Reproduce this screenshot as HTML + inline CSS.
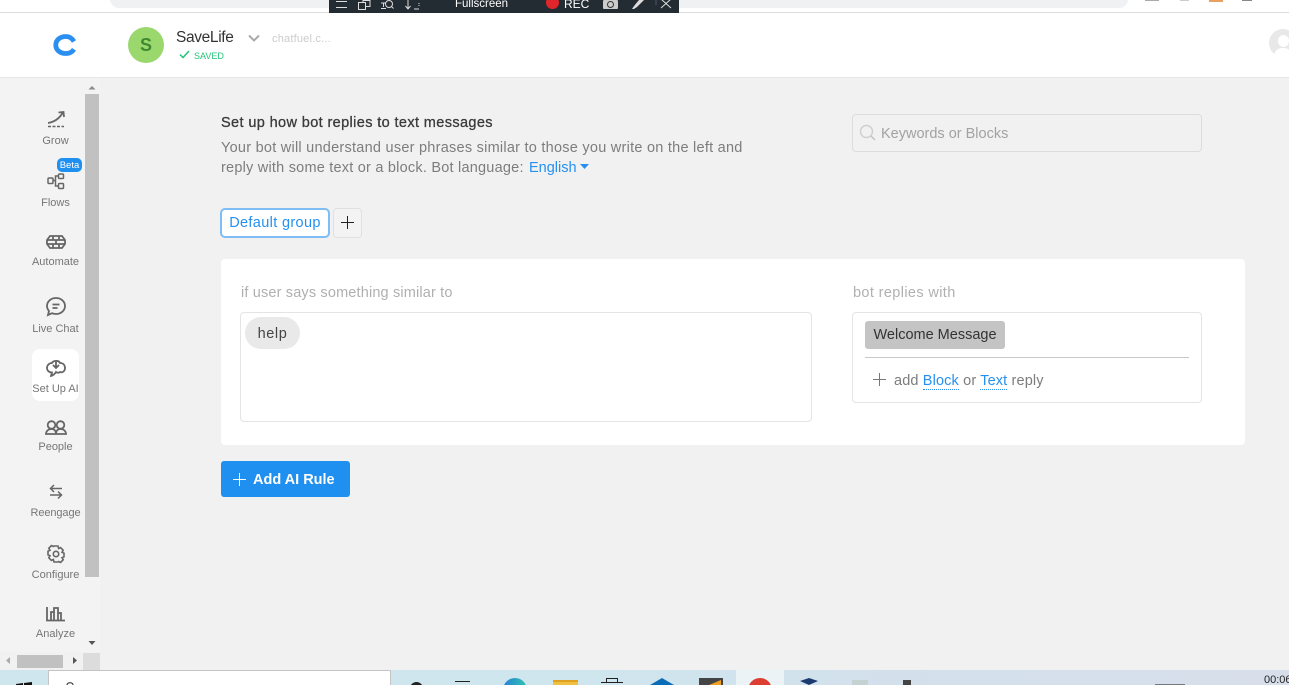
<!DOCTYPE html>
<html><head><meta charset="utf-8"><style>
html,body{margin:0;padding:0;width:1289px;height:685px;overflow:hidden}
body{background:#f1f1f1;font-family:"Liberation Sans",sans-serif;}
#w{position:relative;width:1289px;height:685px;overflow:hidden;background:#f1f1f1}
.a{position:absolute;white-space:nowrap}
.nav{position:absolute;left:0;width:111px;text-align:center;font-size:11px;color:#767676;line-height:13px}
svg{position:absolute;overflow:visible}
.ic{fill:none;stroke:#666;stroke-width:1.8}
</style></head><body><div id="w">
<!-- browser top -->
<div class="a" style="left:0;top:0;width:1289px;height:12px;background:#fff"></div>
<div class="a" style="left:110px;top:-10px;width:1018px;height:18px;background:#f0f1f3;border-radius:12px"></div>
<div class="a" style="left:0;top:12px;width:1289px;height:1px;background:#dcdcdc"></div>
<div class="a" style="left:1145px;top:0;width:14px;height:1px;background:#aaa"></div>
<div class="a" style="left:1180px;top:0;width:9px;height:1px;background:#ccc"></div>
<div class="a" style="left:1209px;top:0;width:14px;height:2px;background:#e8a060"></div>
<div class="a" style="left:1242px;top:0;width:10px;height:1px;background:#888"></div>
<!-- recorder bar -->
<div class="a" style="left:329px;top:0;width:350px;height:15px;background:#232b33"></div>
<svg style="left:329px;top:0" width="350" height="15" fill="none" stroke="#ddd" stroke-width="1">
<path d="M7 1.500h11M7 7.500h11"/><rect x="29.500" y="2.500" width="7" height="7"/><path d="M34 2.500v-2h7v6h-4"/>
<path d="M52 3h5M54.500 3v4M52 8.500h5"/><circle cx="60" cy="4" r="3.500"/><path d="M62.500 6.500l2 2"/>
<path d="M79 0v8M76.500 6l2.500 3 2.500-3M85 9h5" /><path d="M90 3v4" stroke-dasharray="1 1"/>
<path d="M332 -1l10 9M342 -1l-10 9"/><path d="M283 0v5M327 0v5" stroke="#556"/>
</svg>
<div class="a" style="left:455px;top:-3px;font-size:11.500px;color:#fff;line-height:14px">Fullscreen</div>
<div class="a" style="left:546px;top:-4px;width:13px;height:13px;border-radius:50%;background:#e1262b"></div>
<div class="a" style="left:564px;top:-3px;font-size:12px;color:#fff;line-height:14px">REC</div>
<div class="a" style="left:603px;top:0;width:15px;height:9px;background:#ccc;border-radius:1px"></div>
<div class="a" style="left:607px;top:1px;width:5px;height:5px;border:1px solid #333;border-radius:50%"></div>
<svg style="left:631px;top:0" width="14" height="10"><path d="M1 9l2-3 5-6h5l-7 7-3 2z" fill="#ddd"/></svg>
<!-- header -->
<div class="a" style="left:0;top:13px;width:1289px;height:64px;background:#fff"></div>
<div class="a" style="left:0;top:77px;width:1289px;height:1px;background:#e6e6e6"></div>
<svg style="left:53px;top:33px" width="24" height="24"><path d="M21 8.500C19 5 16 3.500 13 3.500 7 3.500 2.800 7 2.800 12c0 5 4.200 8.500 10.200 8.500 3.500 0 6-1.200 8-4.200" fill="none" stroke="#2a8ff0" stroke-width="4.800"/></svg>
<div class="a" style="left:128px;top:27px;width:36px;height:36px;border-radius:50%;background:#9ad86e;color:#3f8a30;font-weight:bold;font-size:18px;line-height:37px;text-align:center">S</div>
<div class="a" style="left:176px;top:29px;font-size:15.500px;line-height:18px;color:#333;letter-spacing:-.35px">SaveLife</div>
<svg style="left:248px;top:34px" width="12" height="9"><path d="M1 1.500l5 5 5-5" fill="none" stroke="#aaa" stroke-width="2"/></svg>
<div class="a" style="left:272px;top:32px;font-size:11px;line-height:14px;color:#ccc;letter-spacing:.2px">chatfuel.c...</div>
<svg style="left:179px;top:50px" width="11" height="9"><path d="M1 4.500l3 3 6-6.500" fill="none" stroke="#25c47a" stroke-width="1.500"/></svg>
<div class="a" style="left:194px;top:50px;font-size:9px;line-height:12px;color:#25c47a">SAVED</div>
<div class="a" style="left:1269px;top:29px;width:28px;height:28px;border-radius:50%;background:#e8e8e8"></div>
<div class="a" style="left:1278px;top:35px;width:11px;height:12px;border-radius:50%;background:#fff"></div>
<div class="a" style="left:1274px;top:48px;width:18px;height:10px;border-radius:8px 8px 0 0;background:#fff"></div>
<!-- sidebar -->
<div class="a" style="left:0;top:78px;width:100px;height:574px;background:#f3f3f3"></div>
<div class="a" style="left:85px;top:94px;width:14px;height:483px;background:#c1c1c1"></div>
<svg style="left:85px;top:84px" width="14" height="566"><path d="M3.500 5.500L7 2l3.500 3.500z" fill="#8a8a8a"/><path d="M3.500 557L7 561l3.500-4z" fill="#555"/></svg>
<div class="a" style="left:0;top:652px;width:100px;height:18px;background:#f1f1f1"></div>
<div class="a" style="left:17px;top:655px;width:46px;height:13px;background:#c1c1c1"></div>
<div class="a" style="left:83px;top:653px;width:17px;height:17px;background:#dcdcdc"></div>
<svg style="left:0;top:652px" width="85" height="18"><path d="M10 5v7l-4-3.500z" fill="#aaa"/><path d="M73 5v7l4-3.500z" fill="#555"/></svg>
<div class="a" style="left:32px;top:349px;width:47px;height:52px;border-radius:8px;background:#fff"></div>

<svg class="ic" style="left:47px;top:110px" width="20" height="20"><path d="M1 13C7 12 12 9 15.500 3M11.500 2.500l5-.5.500 5"/><path d="M1 16.500h16" stroke-dasharray="3 1.500" stroke-width="1.500"/></svg>
<div class="nav" style="top:135px">Grow</div>
<svg class="ic" style="left:47px;top:173px;stroke-width:1.500" width="18" height="17"><rect x="1" y="5" width="5" height="5.500" rx="1"/><rect x="11.500" y="1" width="5" height="4.500" rx="1"/><rect x="11.500" y="10.500" width="5" height="5" rx="1"/><path d="M6 7.500h2.500V3h3M8.500 7.500V13h3"/></svg>
<div class="a" style="left:57px;top:158px;width:25px;height:14px;border-radius:5px;background:#1f8ff0;color:#fff;font-size:9.500px;line-height:15px;text-align:center">Beta</div>
<div class="nav" style="top:197px">Flows</div>
<svg class="ic" style="left:46px;top:235px" width="20" height="14"><path d="M4 1h12l3 4v4l-3 4H4L1 9V5zM1 5h18M1 9h18M7 1v4M13 1v4M10 5v4M7 9v4M13 9v4"/></svg>
<div class="nav" style="top:256px">Automate</div>
<svg class="ic" style="left:46px;top:297px" width="20" height="19"><path d="M10 1c5 0 9 3.500 9 8s-4 8-9 8c-1.500 0-3-.3-4-.8L2 18l1-4C1.800 12.600 1 11 1 9c0-4.500 4-8 9-8z"/><path d="M6.500 7.500h7M6.500 11h5"/></svg>
<div class="nav" style="top:323px">Live Chat</div>
<svg class="ic" style="left:46px;top:359px" width="20" height="18"><path d="M6 4C7 1.500 13 1 14 4c3 0 5 2 5 5 0 3.500-3 5-5 4-1 1-3 1-4 0-1 2-4 4-5 4l1-3.500C3 13.500 1 11.500 1 9c0-3 2.500-5 5-5z"/><path d="M10 3v6M7 6l3 3 3-3"/></svg>
<div class="nav" style="top:383px">Set Up AI</div>
<svg class="ic" style="left:45px;top:420px" width="22" height="15"><circle cx="6.500" cy="5" r="3.800"/><circle cx="15.500" cy="5" r="3.800"/><path d="M1 14c0-3 2.500-5 5.500-5S11 11 11 14zM11 14c0-3 1.500-5 4.500-5s5.500 2 5.500 5z"/></svg>
<div class="nav" style="top:441px">People</div>
<svg class="ic" style="left:49px;top:484px;stroke-width:1.500" width="14" height="15"><path d="M13 4.500H1.500M5 1L1.500 4.500 5 8M1 11h11.500M9 7.500l3.500 3.500L9 14.500"/></svg>
<div class="nav" style="top:507px;letter-spacing:-.1px">Reengage</div>
<svg class="ic" style="left:47px;top:545px;stroke-width:1.600" width="18" height="18"><path d="M7 1h4l.6 2.500 2-.9 2.600 2.700-1.200 2 2 .9v3.600l-2 .9 1.200 2-2.600 2.700-2-.9L11 17H7l-.6-2.500-2 .9-2.600-2.700 1.200-2-2-.9V6.200l2-.9-1.200-2 2.600-2.700 2 .9z"/><circle cx="9" cy="9" r="2.700"/></svg>
<div class="nav" style="top:569px">Configure</div>
<svg class="ic" style="left:46px;top:606px" width="20" height="16"><path d="M1 1v13.500h18M5 14V6h3v8M8 14V2h4v12M12 14V7h3v7"/></svg>
<div class="nav" style="top:628px">Analyze</div>

<!-- content -->
<div class="a" style="left:221px;top:114px;font-size:14.500px;line-height:18px;color:#3a3a3a;letter-spacing:.38px;-webkit-text-stroke:.3px #3a3a3a">Set up how bot replies to text messages</div>
<div class="a" style="left:221px;top:138px;font-size:14.500px;line-height:20px;color:#7d7d7d;letter-spacing:.25px">Your bot will understand user phrases similar to those you write on the left and</div>
<div class="a" style="left:221px;top:158px;font-size:14.500px;line-height:20px;color:#7d7d7d;letter-spacing:.22px">reply with some text or a block. Bot language:</div>
<div class="a" style="left:529px;top:158px;font-size:14.500px;line-height:20px;color:#2590f0">English</div>
<svg style="left:580px;top:164px" width="9" height="6"><path d="M0 0h9L4.500 5z" fill="#2590f0"/></svg>

<div class="a" style="left:852px;top:114px;width:348px;height:36px;border:1px solid #dcdcdc;border-radius:4px;background:#f1f1f1"></div>
<svg style="left:859px;top:124px" width="17" height="17"><circle cx="7.500" cy="7.500" r="6" fill="none" stroke="#d0d0d0" stroke-width="1.500"/><path d="M12 12l4 4" stroke="#c0c0c0" stroke-width="1.300"/></svg>
<div class="a" style="left:881px;top:125px;font-size:14.500px;line-height:18px;color:#a2a2a2">Keywords or Blocks</div>

<div class="a" style="left:220px;top:208px;width:110px;height:30px;box-sizing:border-box;background:#fff;border:2px solid #7fbdf5;border-radius:5px;color:#2590f0;font-size:14.500px;line-height:27px;text-align:center;letter-spacing:.35px">Default group</div>
<div class="a" style="left:333px;top:208px;width:29px;height:30px;box-sizing:border-box;background:#f3f3f3;border:1px solid #e0e0e0;border-radius:4px"></div>
<svg style="left:341px;top:216px" width="14" height="14"><path d="M6.500 0v13M0 6.500h13" stroke="#222" stroke-width="1"/></svg>

<div class="a" style="left:221px;top:259px;width:1024px;height:186px;background:#fff;border-radius:4px"></div>
<div class="a" style="left:241px;top:284px;font-size:14.500px;line-height:18px;color:#b0b0b0;letter-spacing:.16px">if user says something similar to</div>
<div class="a" style="left:853px;top:284px;font-size:14.500px;line-height:18px;color:#b0b0b0;letter-spacing:.37px">bot replies with</div>
<div class="a" style="left:240px;top:312px;width:570px;height:108px;border:1px solid #e4e4e4;border-radius:4px"></div>
<div class="a" style="left:245px;top:317px;width:55px;height:32px;border-radius:16px;background:#e9e9e9;color:#444;font-size:14.500px;line-height:34px;text-align:center;letter-spacing:.6px">help</div>
<div class="a" style="left:852px;top:312px;width:348px;height:89px;border:1px solid #e4e4e4;border-radius:4px"></div>
<div class="a" style="left:865px;top:321px;width:140px;height:28px;border-radius:3px;background:#c4c4c4;color:#333;font-size:14.500px;line-height:29px;text-align:center">Welcome Message</div>
<div class="a" style="left:865px;top:357px;width:324px;height:1px;background:#c8c8c8"></div>
<svg style="left:873px;top:373px" width="14" height="14"><path d="M6.500 0v13M0 6.500h13" stroke="#777" stroke-width="1"/></svg>
<div class="a" style="left:894px;top:372px;font-size:14.500px;line-height:18px;color:#7d7d7d;letter-spacing:.14px">add <span style="color:#2590f0;border-bottom:1px dotted #2590f0">Block</span> or <span style="color:#2590f0;border-bottom:1px dotted #2590f0">Text</span> reply</div>

<div class="a" style="left:221px;top:461px;width:129px;height:36px;border-radius:3px;background:#1f8ff0"></div>
<svg style="left:233px;top:473px" width="14" height="14"><path d="M6.500 0v13M0 6.500h13" stroke="#fff" stroke-width="1"/></svg>
<div class="a" style="left:253px;top:471px;font-size:14.500px;line-height:18px;font-weight:bold;color:#fff">Add AI Rule</div>

<!-- taskbar -->
<div class="a" style="left:0;top:670px;width:1289px;height:15px;background:linear-gradient(90deg,#cfe6ef 0%,#cfe6ef 45%,#d3e0ec 70%,#d8dfeb 100%)"></div>
<div class="a" style="left:48px;top:670px;width:343px;height:15px;background:#fff;border:1px solid #c4c4c4;border-bottom:0;box-sizing:border-box"></div>
<svg style="left:16px;top:682px" width="20" height="3"><path d="M0 2l7-1v2H0zM8 1l8-1v3H8z" fill="#111"/></svg>
<svg style="left:66px;top:682px" width="10" height="3"><path d="M1 3c0-3 6-3 6 0" stroke="#222" fill="none"/></svg>
<div class="a" style="left:410px;top:682px;width:13px;height:13px;background:#222;border-radius:50%"></div>
<div class="a" style="left:455px;top:681px;width:15px;height:4px;border-top:1px solid #222;box-sizing:border-box"></div>
<div class="a" style="left:503px;top:678px;width:24px;height:24px;border-radius:50%;background:linear-gradient(90deg,#2a7fd6,#2ec6b0)"></div>
<div class="a" style="left:553px;top:680px;width:25px;height:5px;background:#f0c040;border-top:2px solid #e0a020;box-sizing:border-box"></div>
<div class="a" style="left:601px;top:682px;width:22px;height:3px;border-top:1px solid #222;box-sizing:border-box"></div>
<div class="a" style="left:606px;top:678px;width:12px;height:4px;border:1px solid #222;border-bottom:0;box-sizing:border-box"></div>
<svg style="left:650px;top:678px" width="24" height="7"><path d="M0 7L12 0l12 7z" fill="#0b6db8"/></svg>
<div class="a" style="left:699px;top:678px;width:24px;height:7px;background:#444"></div>
<svg style="left:709px;top:680px" width="12" height="5"><path d="M0 5L12 0v5z" fill="#f0a020"/></svg>
<div class="a" style="left:736px;top:670px;width:48px;height:15px;background:#ecf3f7"></div>
<div class="a" style="left:748px;top:678px;width:24px;height:24px;border-radius:50%;background:#dc3f32"></div>
<svg style="left:797px;top:678px" width="24" height="7"><path d="M3 3L12 0l9 3-9 4z" fill="#1a3a70"/></svg>
<div class="a" style="left:852px;top:680px;width:16px;height:5px;background:#c4d2d2"></div>
<div class="a" style="left:903px;top:680px;width:8px;height:5px;background:#444"></div>
<div class="a" style="left:1155px;top:684px;width:30px;height:1px;background:#333;opacity:.6"></div>
<div class="a" style="left:1264px;top:674px;font-size:11px;line-height:13px;color:#222">00:06</div>
</div></body></html>
